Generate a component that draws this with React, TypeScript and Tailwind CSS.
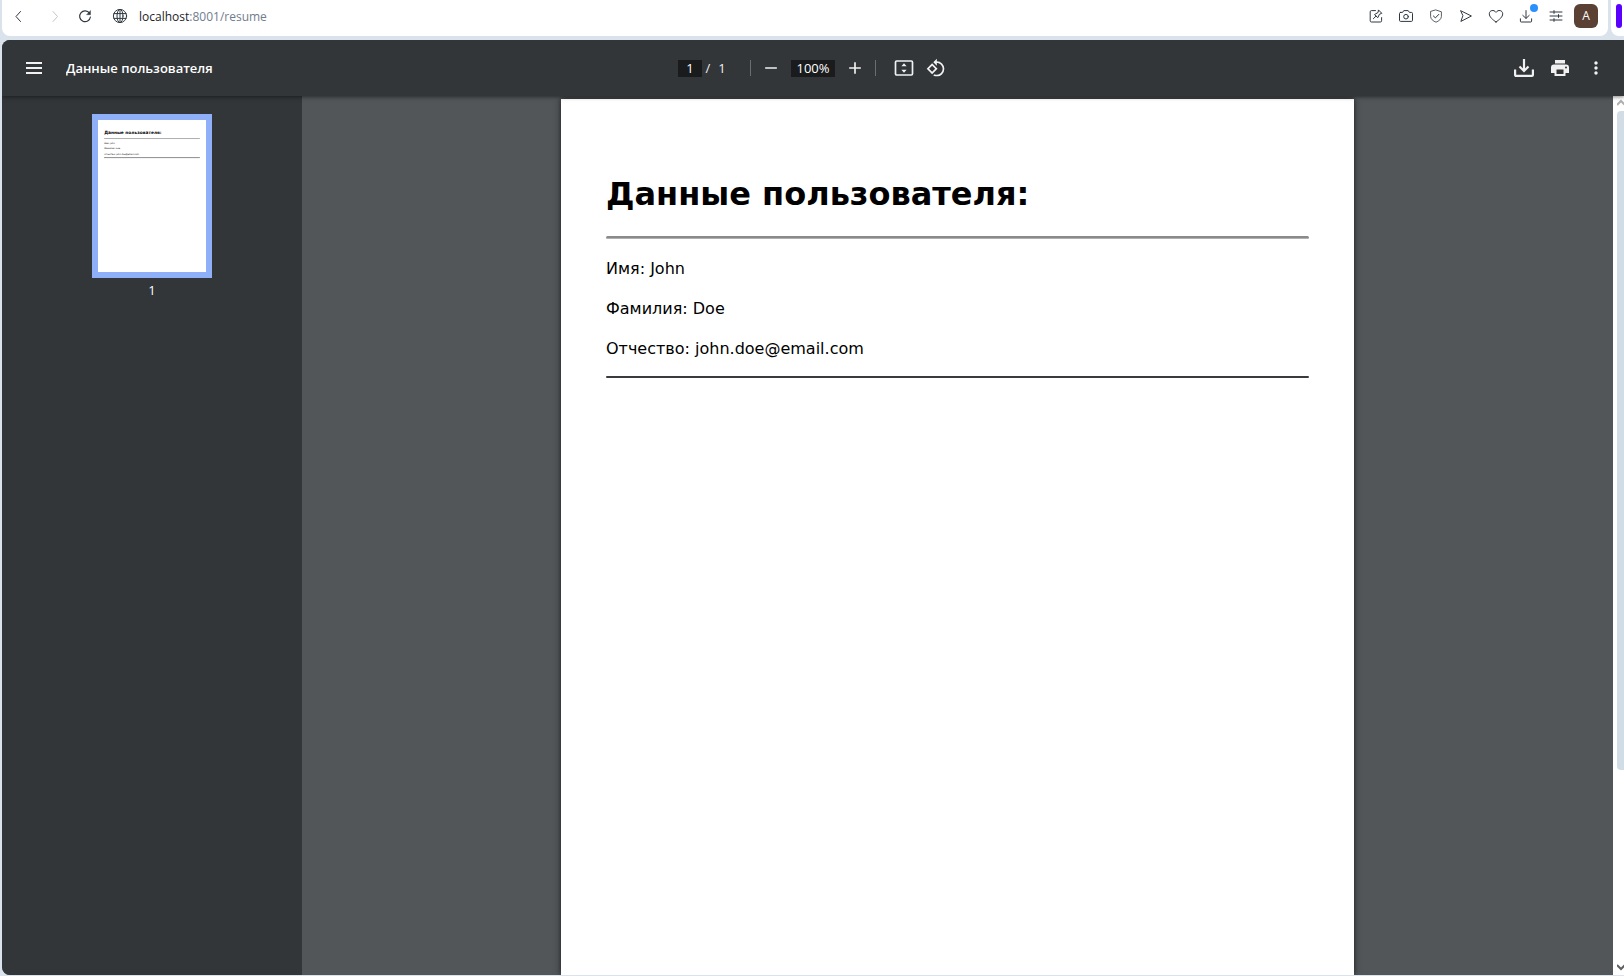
import type { ReactNode } from "react";
import { MdAdd, MdMoreVert, MdOutlineRotate90DegreesCcw, MdRemove } from "react-icons/md";

type IconProps = { className?: string; children: ReactNode; box?: string };

function LineIcon({ className = "size-4", children, box = "0 0 16 16" }: IconProps) {
  return (
    <svg
      viewBox={box}
      className={className}
      fill="none"
      stroke="currentColor"
      strokeWidth="1"
      strokeLinecap="round"
      strokeLinejoin="round"
      aria-hidden="true"
    >
      {children}
    </svg>
  );
}

function BarButton({ label, children, className = "" }: { label: string; children: ReactNode; className?: string }) {
  return (
    <button type="button" aria-label={label} className={`flex size-[30px] shrink-0 items-center justify-center ${className}`}>
      {children}
    </button>
  );
}

function AddressBar() {
  return (
    <header className="flex h-9 shrink-0 pl-[2px]">
      <div className="flex h-full min-w-0 flex-1 items-center rounded-b-lg bg-white pr-[10px] pb-[4px] pl-px text-[#2e3840]">
        <BarButton label="Назад">
          <LineIcon><path d="M10.500 3.500 6 8.500l4.500 5" /></LineIcon>
        </BarButton>
        <BarButton label="Вперёд" className="ml-[7px] text-[#c3c6c9]">
          <LineIcon><path d="m6 3.500 4.500 5-4.500 5" /></LineIcon>
        </BarButton>
        <BarButton label="Обновить">
          <LineIcon>
            <path strokeWidth="1.200" d="M12.500 5.200A5.400 5.400 0 1 0 13.400 9" />
            <path d="M13.500 2.800v3.900H9.800z" fill="currentColor" strokeWidth="0.400" />
          </LineIcon>
        </BarButton>
        <div className="ml-[5px] flex min-w-0 flex-1 items-center">
          <BarButton label="О сайте">
            <LineIcon>
              <circle cx="8" cy="8" r="6.600" />
              <ellipse cx="8" cy="8" rx="3" ry="6.600" />
              <path d="M8 1.400v13.200M2 5.600h12M2 10.400h12" />
            </LineIcon>
          </BarButton>
          <span className="ml-1 pt-px font-['Open_Sans','Noto_Sans',sans-serif] text-[12px] text-[#1e2328]">
            localhost<span className="text-[#6f7d8e]">:8001/resume</span>
          </span>
        </div>
        <BarButton label="Заметка">
          <LineIcon>
            <path d="M7.500 2.600H3.400a1.200 1.200 0 0 0-1.200 1.200v9a1.200 1.200 0 0 0 1.200 1.200h9a1.200 1.200 0 0 0 1.200-1.200V9.600" />
            <path d="M10.700 2.200 13.800 5.300l-2.400 1-1.600 3.400L6.500 6.600l3.300-2zM7.900 8.200 5.400 10.700" />
          </LineIcon>
        </BarButton>
        <BarButton label="Снимок">
          <LineIcon>
            <path d="M2.600 4.400h2l1.200-1.800h4.400l1.200 1.800h2a1.100 1.100 0 0 1 1.100 1.100v6.800a1.100 1.100 0 0 1-1.100 1.100H2.600a1.100 1.100 0 0 1-1.100-1.100V5.500a1.100 1.100 0 0 1 1.100-1.100z" />
            <circle cx="8" cy="8.700" r="2.300" />
          </LineIcon>
        </BarButton>
        <BarButton label="Защита">
          <LineIcon>
            <path strokeWidth="0.800" d="M8 2 13.400 3.800v4.600c0 2.600-2.400 4.600-5.400 5.800-3-1.200-5.400-3.200-5.400-5.800V3.800z" />
            <path d="m5.400 8 2 1.900 3.400-3.500" />
          </LineIcon>
        </BarButton>
        <BarButton label="Отправить">
          <LineIcon><path d="M2.900 2.800 13.400 8 2.900 13.400 4.800 8z" /></LineIcon>
        </BarButton>
        <BarButton label="Избранное">
          <LineIcon>
            <path d="M8 14C4.600 11.600 1.300 9 1.300 5.800c0-3.500 4.600-4.600 6.700-1.400 2.100-3.200 6.700-2.100 6.700 1.400C14.700 9 11.400 11.600 8 14z" />
          </LineIcon>
        </BarButton>
        <BarButton label="Загрузки" className="relative">
          <LineIcon>
            <path d="M8 2.600v7.600M4.800 7.400 8 10.400l3.200-3M2.400 10.800v2.400a.8.8 0 0 0 .8.8h9.600a.8.8 0 0 0 .8-.8v-2.400" />
          </LineIcon>
          <span className="absolute top-[3px] right-[3px] size-2 rounded-full bg-[#2b90fb]" />
        </BarButton>
        <BarButton label="Настройки">
          <LineIcon><path d="M2 4h12M2 8h12M2 12h12M6 2.600v2.800M10.500 6.600v2.800M6 10.600v2.800" /></LineIcon>
        </BarButton>
        <button
          type="button"
          aria-label="Профиль A"
          className="ml-[3px] size-6 shrink-0 rounded-md bg-[#5b4034] font-['Open_Sans',sans-serif] text-[12px] text-white"
        >
          A
        </button>
      </div>
      <div className="ml-[3px] h-full w-[13px] shrink-0 rounded-bl-lg bg-white pt-1 pl-[5px]">
        <div className="h-6 w-[6px] rounded-full bg-[#5a00ff]" />
      </div>
    </header>
  );
}

function ToolButton({ label, children }: { label: string; children: ReactNode }) {
  return (
    <button type="button" aria-label={label} className="flex size-8 shrink-0 items-center justify-center">
      {children}
    </button>
  );
}

function Toolbar() {
  return (
    <div className="relative z-10 flex h-14 shrink-0 items-center bg-[#323639] font-['Open_Sans','Noto_Sans',sans-serif] text-[13px] text-[#f1f1f1] shadow-[0_1px_4px_rgba(0,0,0,0.5)]">
      <div className="flex min-w-0 flex-1 items-center pl-4">
        <ToolButton label="Меню">
          <svg viewBox="0 0 16 12" className="h-3 w-4" fill="currentColor" aria-hidden="true">
            <path d="M0 0h16v2H0zM0 5h16v2H0zM0 10h16v2H0z" />
          </svg>
        </ToolButton>
        <h1 className="ml-4 truncate pt-[2px] font-semibold text-white">Данные пользователя</h1>
      </div>
      <div className="flex shrink-0 items-center">
        <input
          aria-label="Страница"
          defaultValue="1"
          className="h-[17px] w-6 bg-[#191b1c] pt-px text-center text-white outline-none"
        />
        <span className="ml-[2px] w-2 pt-[2px] text-center">/</span>
        <span className="ml-[6px] w-2 pt-[2px] text-center">1</span>
        <span className="ml-6 h-4 w-px bg-[#6b6e70]" />
        <span className="ml-1 flex items-center">
          <ToolButton label="Уменьшить"><MdRemove size={20} /></ToolButton>
          <input
            aria-label="Масштаб"
            defaultValue="100%"
            className="mx-1 h-[17px] w-11 bg-[#191b1c] pt-px text-center text-white outline-none"
          />
          <ToolButton label="Увеличить"><MdAdd size={20} /></ToolButton>
        </span>
        <span className="ml-1 h-4 w-px bg-[#6b6e70]" />
        <span className="ml-3 flex items-center">
          <ToolButton label="По размеру страницы">
            <svg viewBox="0 0 20 16" className="h-4 w-5" aria-hidden="true">
              <rect x="1.500" y="1" width="17" height="14" rx="1.200" fill="none" stroke="currentColor" strokeWidth="1.700" />
              <path d="M10 3.200 12.600 6.200H7.400zM10 12.800 7.400 9.800h5.200z" fill="currentColor" />
            </svg>
          </ToolButton>
          <ToolButton label="Повернуть"><MdOutlineRotate90DegreesCcw size={20} /></ToolButton>
        </span>
      </div>
      <div className="flex flex-1 items-center justify-end gap-1 pr-3">
        <ToolButton label="Скачать">
          <svg viewBox="0 0 20 18" className="h-[18px] w-5" fill="none" stroke="currentColor" aria-hidden="true">
            <path strokeWidth="2.200" strokeLinejoin="round" d="M1.100 10.500V15.900a1 1 0 0 0 1 1h15.800a1 1 0 0 0 1-1v-5.400" />
            <path strokeWidth="2.200" d="M10 0v11.500M5.500 7.500 10 12l4.500-4.500" />
          </svg>
        </ToolButton>
        <ToolButton label="Печать">
          <svg viewBox="0 0 18 16" className="h-4 w-[18px]" aria-hidden="true">
            <path
              fill="currentColor"
              fillRule="evenodd"
              d="M4 0h10v3.500H4zM3 4.500h12a3 3 0 0 1 3 3V13h-3.500v3h-11v-3H0V7.500a3 3 0 0 1 3-3zM5.500 9.500V14h7V9.500zM15 6.500a1 1 0 1 0 0 2 1 1 0 0 0 0-2z"
            />
          </svg>
        </ToolButton>
        <ToolButton label="Ещё"><MdMoreVert size={20} /></ToolButton>
      </div>
    </div>
  );
}

/** Reduced drawing of the first page for the thumbnail strip. */
function PagePreview() {
  return (
    <svg viewBox="0 0 793 1116" className="h-[152px] w-[108px] bg-white" fontFamily="'DejaVu Sans', sans-serif" aria-hidden="true">
      <text x="45" y="106" fontSize="32" fontWeight="700">Данные пользователя:</text>
      <path d="M45 136h703" stroke="#888" strokeWidth="5" />
      <g fontSize="16">
        <text x="45" y="175">Имя: John</text>
        <text x="45" y="216">Фамилия: Doe</text>
        <text x="45" y="256">Отчество: john.doe@email.com</text>
      </g>
      <path d="M45 276h703" stroke="#555" strokeWidth="5" />
    </svg>
  );
}

function Sidebar() {
  return (
    <aside className="flex w-[300px] shrink-0 flex-col items-center bg-[#323639] pt-[18px]">
      <button type="button" aria-label="Страница 1" className="border-6 border-[#8fb0f8]">
        <PagePreview />
      </button>
      <span className="mt-[2px] font-['Open_Sans',sans-serif] text-[13px] leading-5 text-white">1</span>
    </aside>
  );
}

function DocumentPage() {
  return (
    <article className="w-[793px] shrink-0 bg-white px-[45px] pt-[73px] font-['DejaVu_Sans',sans-serif] text-[16px] leading-5 text-black shadow-[0_0_6px_rgba(0,0,0,0.7)]">
      <h2 className="text-[32px] leading-[44px] font-bold">Данные пользователя:</h2>
      <hr className="mt-5 h-[3px] rounded-sm border-0 border-b border-[#b0b0b0] bg-[#8a8a8a]" />
      <div className="mt-5 flex flex-col gap-5">
        <p>Имя: John</p>
        <p>Фамилия: Doe</p>
        <p>Отчество: john.doe@email.com</p>
      </div>
      <hr className="mt-[17px] h-[2px] rounded-sm border-0 bg-[#3a3a3e]" />
    </article>
  );
}

function Scrollbar() {
  return (
    <div className="flex w-[11px] shrink-0 flex-col overflow-hidden bg-white pl-[4px]" aria-hidden="true">
      <svg viewBox="0 0 8 15" className="h-[15px] w-2 shrink-0" fill="none" stroke="#b0b0b0" strokeWidth="2">
        <path d="M0 9l4-4 4 4" />
      </svg>
      <div className="w-3 flex-[659] rounded bg-[#d2dce5]" />
      <div className="flex-[190]" />
      <svg viewBox="0 0 8 15" className="h-[15px] w-2 shrink-0" fill="none" stroke="#606060" strokeWidth="2">
        <path d="M0 5l4 4 4-4" />
      </svg>
    </div>
  );
}

export default function App() {
  return (
    <div className="flex h-screen flex-col overflow-hidden bg-[#dae2ec]">
      <AddressBar />
      <main className="mt-1 mb-px ml-[2px] flex min-h-0 flex-1 flex-col overflow-hidden rounded-l-lg bg-[#525659]">
        <Toolbar />
        <div className="flex min-h-0 flex-1">
          <Sidebar />
          <div className="flex min-w-0 flex-1 justify-center overflow-hidden pt-[3px]">
            <DocumentPage />
          </div>
          <Scrollbar />
        </div>
      </main>
    </div>
  );
}
